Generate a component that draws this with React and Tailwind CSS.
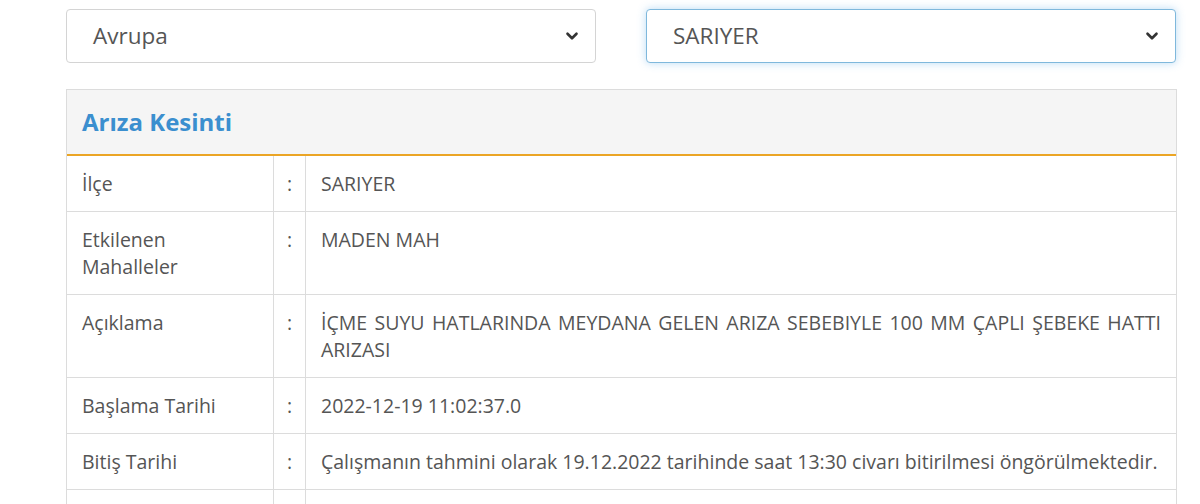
import { ChevronDown } from 'lucide-react';

const rows = [
  { label: 'İlçe', value: 'SARIYER' },
  { label: 'Etkilenen Mahalleler', value: 'MADEN MAH' },
  {
    label: 'Açıklama',
    value: 'İÇME SUYU HATLARINDA MEYDANA GELEN ARIZA SEBEBIYLE 100 MM ÇAPLI ŞEBEKE HATTI ARIZASI',
  },
  { label: 'Başlama Tarihi', value: '2022-12-19 11:02:37.0' },
  {
    label: 'Bitiş Tarihi',
    value: 'Çalışmanın tahmini olarak 19.12.2022 tarihinde saat 13:30 civarı bitirilmesi öngörülmektedir.',
  },
  { label: '', value: '' },
];

function Select({ value, focused }) {
  return (
    <div
      className={
        'flex items-center justify-between h-[54px] w-[530px] rounded-[4px] bg-white pl-[26px] pr-[14px] text-[22.5px] text-[#555] ' +
        (focused
          ? 'border border-[#7fb8dc] shadow-[0_0_8px_rgba(102,175,233,0.45)]'
          : 'border border-[#d4d4d4]')
      }
    >
      <span>{value}</span>
      <ChevronDown className="w-[18px] h-[18px] text-[#333]" strokeWidth={3.5} />
    </div>
  );
}

export default function App() {
  return (
    <div
      className="h-[504px] bg-white pl-[66px] pt-[9px] overflow-hidden"
      style={{ fontFamily: '"Open Sans", "DejaVu Sans", sans-serif' }}
    >
      <div className="flex gap-[50px]">
        <Select value="Avrupa" />
        <Select value="SARIYER" focused />
      </div>

      <div className="mt-[26px] w-[1111px] border border-[#dcdcdc]">
        <div className="h-[66px] bg-[#f5f5f5] border-b-[2px] border-[#eba525] flex items-center px-[15px]">
          <h2 className="text-[24px] font-bold text-[#3b8fcf]">Arıza Kesinti</h2>
        </div>
        <div className="text-[19.5px] leading-[27px] text-[#555]">
          {rows.map((r, i) => (
            <div key={i} className="flex border-b border-[#dcdcdc] last:border-b-0">
              <div className="w-[207px] px-[15px] py-[14px] border-r border-[#dcdcdc] min-h-[55px]">
                {r.label === 'Etkilenen Mahalleler' ? (
                  <>
                    Etkilenen
                    <br />
                    Mahalleler
                  </>
                ) : (
                  r.label
                )}
              </div>
              <div className="w-[32px] py-[14px] text-center border-r border-[#dcdcdc]">
                {r.label ? ':' : ''}
              </div>
              <div className="flex-1 px-[15px] py-[14px] text-justify">{r.value}</div>
            </div>
          ))}
        </div>
      </div>
    </div>
  );
}
